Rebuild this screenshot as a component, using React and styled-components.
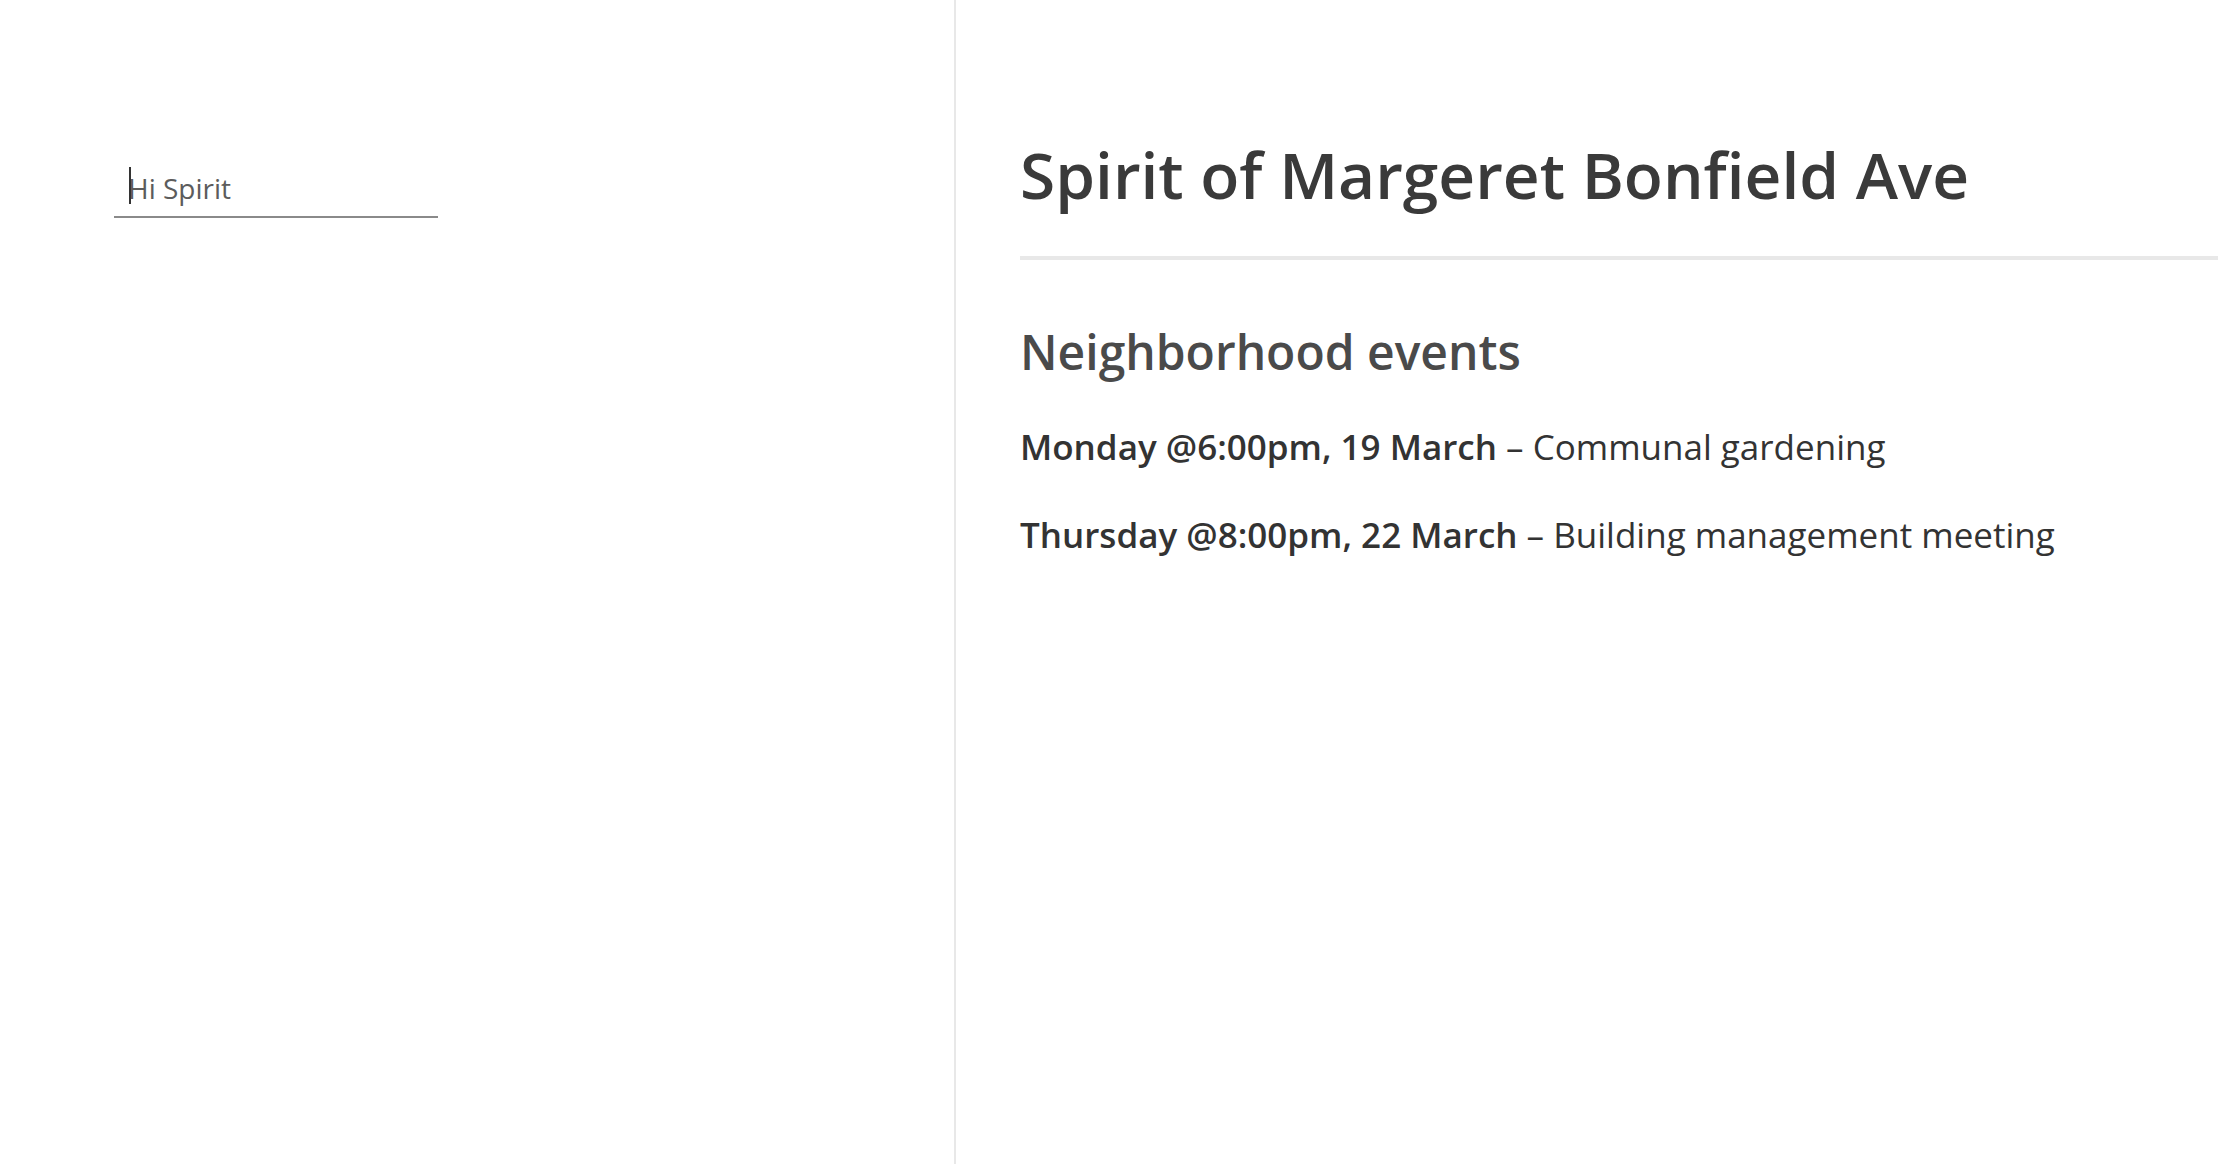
import styled, { createGlobalStyle } from "styled-components";

const GlobalStyle = createGlobalStyle`
  html, body {
    margin: 0;
    padding: 0;
    background: #fff;
  }
  body {
    font-family: "Open Sans", "Noto Sans", sans-serif;
  }
`;

const App = () => {
  return (
    <>
      <GlobalStyle />
      <Page>
        <Sidebar>
          <Field>
            <NameInput placeholder="Hi Spirit" />
            <Caret />
          </Field>
        </Sidebar>
        <Main>
          <Title>Spirit of Margeret Bonfield Ave</Title>
          <Rule />
          <Heading>Neighborhood events</Heading>
          <Event>
            <b>Monday @6:00pm, 19 March</b> – Communal gardening
          </Event>
          <Event>
            <b>Thursday @8:00pm, 22 March</b> – Building management meeting
          </Event>
        </Main>
      </Page>
    </>
  );
};

export default App;

const Page = styled.div`
  display: flex;
  min-height: 100vh;
`;

const Sidebar = styled.aside`
  width: 956px;
  flex-shrink: 0;
  border-right: 2px solid #e8e8e8;
  padding: 161px 0 0 114px;
  box-sizing: border-box;
`;

const Field = styled.div`
  position: relative;
  width: 324px;
`;

const NameInput = styled.input`
  display: block;
  width: 100%;
  height: 57px;
  box-sizing: border-box;
  padding: 0 14px 2px;
  border: none;
  border-bottom: 2px solid #8a8a8a;
  outline: none;
  font-family: "Open Sans", sans-serif;
  font-size: 28px;
  color: #333;
  background: transparent;

  &::placeholder {
    color: #5c5c5c;
  }
`;

const Caret = styled.span`
  position: absolute;
  left: 15px;
  top: 6px;
  width: 2px;
  height: 37px;
  background: #333;
`;

const Main = styled.main`
  flex: 1;
  padding: 137px 0 0 64px;
  color: #333;
`;

const Title = styled.h1`
  margin: 0;
  font-size: 64px;
  line-height: 1.2;
  font-weight: 600;
  color: #3a3a3a;
`;

const Rule = styled.hr`
  margin: 42px 0 0;
  border: none;
  height: 4px;
  background: #e8e8e8;
`;

const Heading = styled.h2`
  margin: 63px 0 0;
  font-size: 48px;
  line-height: 1.2;
  font-weight: 600;
  color: #4a4a4a;
`;

const Event = styled.p`
  margin: 43px 0 0;
  font-size: 35px;
  line-height: 48px;
  color: #333;

  & + & {
    margin-top: 40px;
  }

  b {
    font-weight: 600;
  }
`;
